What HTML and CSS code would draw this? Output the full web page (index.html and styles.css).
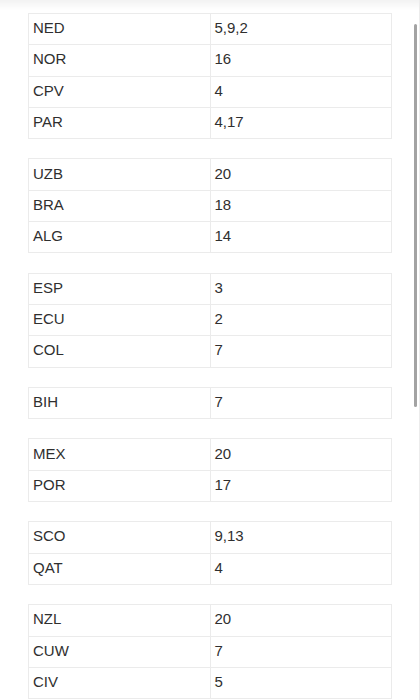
FILE: index.html
```html
<!DOCTYPE html>
<html>
<head>
<meta charset="utf-8">
<link rel="stylesheet" href="styles.css">
</head>
<body>
<div class="top-shade"></div>
<main class="page">
  <table class="grid">
    <tr><td>NED</td><td>5,9,2</td></tr>
    <tr><td>NOR</td><td>16</td></tr>
    <tr><td>CPV</td><td>4</td></tr>
    <tr><td>PAR</td><td>4,17</td></tr>
  </table>
  <table class="grid">
    <tr><td>UZB</td><td>20</td></tr>
    <tr><td>BRA</td><td>18</td></tr>
    <tr><td>ALG</td><td>14</td></tr>
  </table>
  <table class="grid">
    <tr><td>ESP</td><td>3</td></tr>
    <tr><td>ECU</td><td>2</td></tr>
    <tr><td>COL</td><td>7</td></tr>
  </table>
  <table class="grid">
    <tr><td>BIH</td><td>7</td></tr>
  </table>
  <table class="grid">
    <tr><td>MEX</td><td>20</td></tr>
    <tr><td>POR</td><td>17</td></tr>
  </table>
  <table class="grid">
    <tr><td>SCO</td><td>9,13</td></tr>
    <tr><td>QAT</td><td>4</td></tr>
  </table>
  <table class="grid">
    <tr><td>NZL</td><td>20</td></tr>
    <tr><td>CUW</td><td>7</td></tr>
    <tr><td>CIV</td><td>5</td></tr>
  </table>
</main>
<div class="scroll-edge"></div>
<div class="scroll-thumb"></div>
</body>
</html>
```
FILE: styles.css
```css
html, body {
  margin: 0;
  padding: 0;
  background: #ffffff;
  overflow: hidden;
}
body {
  font-family: "Liberation Sans", Arial, sans-serif;
  font-size: 15px;
  color: #2f2f2f;
}
.page {
  padding: 13px 0 0 28px;
  display: flex;
  flex-direction: column;
  gap: 19.3px;
}
.grid {
  width: 364px;
  table-layout: fixed;
  border-collapse: collapse;
}
.grid td {
  border: 1px solid #ebebeb;
  height: 31.3px;
  box-sizing: border-box;
  padding: 0 4px 2px 4px;
  vertical-align: middle;
  line-height: 18px;
}
.top-shade {
  position: fixed;
  left: 0;
  top: 0;
  width: 100%;
  height: 10px;
  background: linear-gradient(to bottom, rgba(0,0,0,0.05), rgba(0,0,0,0));
  pointer-events: none;
}
.scroll-edge {
  position: fixed;
  right: 0;
  top: 0;
  width: 1px;
  height: 100%;
  background: #ececec;
}
.scroll-thumb {
  position: fixed;
  left: 414px;
  top: 24px;
  width: 3px;
  height: 383px;
  border-radius: 2px;
  background: #a3a3a3;
}
```
